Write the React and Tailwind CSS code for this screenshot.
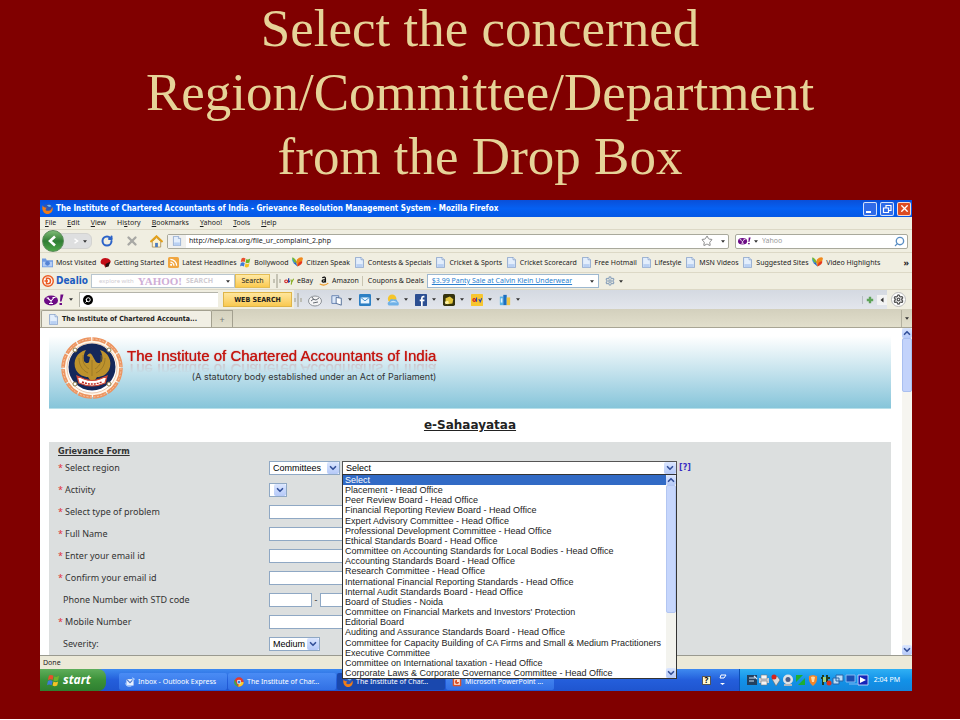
import React, { useState } from "react";
import { ChevronDown, ChevronUp, RotateCw, X, Star, Search, Settings } from "lucide-react";

const bookmarks = [
    { label: "Most Visited", icon: "folder" },
    { label: "Getting Started", icon: "red" },
    { label: "Latest Headlines", icon: "feed" },
    { label: "Bollywood", icon: "windows" },
    { label: "Citizen Speak", icon: "butterfly" },
    { label: "Contests & Specials", icon: "page" },
    { label: "Cricket & Sports", icon: "page" },
    { label: "Cricket Scorecard", icon: "page" },
    { label: "Free Hotmail", icon: "page" },
    { label: "Lifestyle", icon: "page" },
    { label: "MSN Videos", icon: "page" },
    { label: "Suggested Sites", icon: "page" },
    { label: "Video Highlights", icon: "butterfly" },
];

const menus = [
    ["", "F", "ile"],
    ["", "E", "dit"],
    ["", "V", "iew"],
    ["Hi", "s", "tory"],
    ["", "B", "ookmarks"],
    ["", "Y", "ahoo!"],
    ["", "T", "ools"],
    ["", "H", "elp"],
];

const committees = [
    "Select",
    "Placement - Head Office",
    "Peer Review Board - Head Office",
    "Financial Reporting Review Board - Head Office",
    "Expert Advisory Committee - Head Office",
    "Professional Development Committee - Head Office",
    "Ethical Standards Board - Head Office",
    "Committee on Accounting Standards for Local Bodies - Head Office",
    "Accounting Standards Board - Head Office",
    "Research Committee - Head Office",
    "International Financial Reporting Standards - Head Office",
    "Internal Audit Standards Board - Head Office",
    "Board of Studies - Noida",
    "Committee on Financial Markets and Investors' Protection",
    "Editorial Board",
    "Auditing and Assurance Standards Board - Head Office",
    "Committee for Capacity Building of CA Firms and Small & Medium Practitioners",
    "Executive Committee",
    "Committee on International taxation - Head Office",
    "Corporate Laws & Corporate Governance Committee - Head Office",
];

function Icon({ name, className = "size-[11px]" }) {
    const shapes = {
        page: (
            <>
                <path d="M2 .5h7l3 3v10H2z" fill="#e3eefc" stroke="#7f9cc8" />
                <path d="M9 .5v3h3" fill="#fff" stroke="#7f9cc8" />
                <path d="M3 9h8v4H3z" fill="#b9d0f2" />
            </>
        ),
        folder: (
            <>
                <path d="M0 2h5l1 2h8v9H0z" fill="#6f9ae0" />
                <path d="M1 6h12v6H1z" fill="#b4cdf5" />
                <circle cx="7" cy="8" r="3" fill="#5684d4" />
            </>
        ),
        red: (
            <>
                <path d="M1 5c1-5 9-5 12-1 2 4-2 6-5 6l-1 4-2-4C2 10 0 8 1 5z" fill="#c30d17" />
                <path d="M7 9l6-3-2 6-4 1z" fill="#27100f" />
            </>
        ),
        feed: (
            <>
                <rect width="14" height="14" rx="2" fill="#f0a640" />
                <circle cx="4" cy="10" r="1.4" fill="#fff" />
                <path d="M3 6.500a4.500 4.500 0 0 1 4.500 4.500M3 3a8 8 0 0 1 8 8" fill="none" stroke="#fff" strokeWidth="1.600" />
            </>
        ),
        windows: (
            <>
                <path d="M2 2q2-2 5 0L6 6.500q-2-1.500-5 0z" fill="#e8502c" />
                <path d="M8 2.500q2 1.500 5-.5l-1 5q-3 1.500-5 0z" fill="#6fb52b" />
                <path d="M1 7.500q2.500-1.500 5 0L5 12q-3-1.500-5 0z" fill="#3e7ad8" />
                <path d="M7 8q2.500 1.500 5 0l-1 4.500q-3 1.500-5 0z" fill="#f6c126" />
            </>
        ),
        butterfly: (
            <>
                <path d="M7 7L1 1Q-1 4 2 7z" fill="#2f9ede" />
                <path d="M7 8L4 3Q2 0 0 1l3 6z" fill="#7ab82e" />
                <path d="M7 12Q3 4 9 1q4-2 5 1-1 5-7 10z" fill="#f08a1c" />
                <path d="M7 12Q7 6 13 5q1 4-6 7z" fill="#e5371e" />
                <path d="M7 12L1 7h4z" fill="#2367c4" />
            </>
        ),
        firefox: (
            <>
                <circle cx="7" cy="7" r="6" fill="#2d55b5" />
                <path d="M1 3c-2 5 1 11 6 11s8-5 6-9c-1 4-3 5-6 5S4 8 6 6C3 6 1 5 1 3z" fill="#ef7d17" />
                <path d="M6 3q4-2 6 1l-3 1z" fill="#71b7ee" />
            </>
        ),
        chrome: (
            <>
                <circle cx="7" cy="7" r="6.500" fill="#e33b2e" />
                <path d="M1 4l5 9.500A6.500 6.500 0 0 1 1 4z" fill="#3ea94b" />
                <path d="M7 7h6.500A6.500 6.500 0 0 1 6 13.500z" fill="#f8cf2d" />
                <circle cx="7" cy="7" r="3" fill="#fff" />
                <circle cx="7" cy="7" r="2.200" fill="#3f7be0" />
            </>
        ),
        outlook: (
            <>
                <path d="M2 3h10v9H2z" fill="#e8f1ff" />
                <path d="M2 3l5 5 5-5" fill="none" stroke="#4d78c9" strokeWidth="1.500" />
                <path d="M1 8a5 5 0 0 0 8 4M10 1l3 2-3 2" fill="none" stroke="#a8ccff" strokeWidth="1.500" />
            </>
        ),
        powerpoint: (
            <>
                <rect x="1" y="1" width="12" height="12" rx="1" fill="#d9532c" />
                <rect x="3" y="3" width="8" height="8" fill="#fbe5da" />
                <path d="M7 4a3 3 0 1 0 3 3H7z" fill="#d9532c" />
            </>
        ),
        home: (
            <>
                <path d="M2.500 7v6h9V7L7 3z" fill="#fff3cf" stroke="#a08450" strokeWidth=".8" />
                <path d="M.5 7.500L7 1.300l6.500 6.200" fill="none" stroke="#e3a01a" strokeWidth="2" />
                <path d="M5.500 8.500h3V13h-3z" fill="#4c7bc0" />
            </>
        ),
        pages: (
            <>
                <path d="M1 2h8v9H1z" fill="#dbe7f8" stroke="#5a79ab" />
                <path d="M6 4l6 1v8l-6-2z" fill="#fff" stroke="#44618f" />
            </>
        ),
        mail: (
            <>
                <rect width="14" height="14" rx="1.500" fill="#2c7fc4" />
                <path d="M2 4h10v7H2z" fill="#e9f5ff" />
                <path d="M2 4l5 4 5-4" fill="none" stroke="#2c7fc4" />
            </>
        ),
        weather: (
            <>
                <circle cx="6" cy="5.500" r="5" fill="#f5c52c" />
                <path d="M2 13.500q-3-3 1-5 1-4 5-2 4-1 4 2 3 2 1 5z" fill="#6fb1e8" />
                <path d="M3 10q4-4 9 0-4-1-9 0z" fill="#cde7fb" />
            </>
        ),
        facebook: (
            <>
                <rect width="14" height="14" rx="1" fill="#2c4f92" />
                <path d="M11 3H9.500Q8 3 8 5v9M5.500 7.500H11" fill="none" stroke="#fff" strokeWidth="2" />
            </>
        ),
        cards: (
            <>
                <rect width="14" height="14" rx="2" fill="#34330f" />
                <path d="M3 5l5-2 4 3-1 5-6 1-2-3z" fill="#e2c63f" />
                <path d="M2 9l4-1 1 3-4 1z" fill="#fff3a6" />
            </>
        ),
        market: (
            <>
                <rect width="14" height="14" rx="1" fill="#f7c62f" />
                <circle cx="3.800" cy="7" r="1.600" fill="none" stroke="#d42222" strokeWidth="1.300" />
                <path d="M6.500 4v5M9 6l2 3M12.500 5l-2 5" fill="none" stroke="#2d49b0" strokeWidth="1.300" />
            </>
        ),
        ebay: (
            <>
                <circle cx="3" cy="7.500" r="2" fill="none" stroke="#d42222" strokeWidth="1.500" />
                <path d="M6.500 3v6.500M6.500 7.500h2" fill="none" stroke="#27409e" strokeWidth="1.800" />
                <path d="M9.500 5l1.500 3.500L13.500 4M11 8l-1 4" fill="none" stroke="#86ac20" strokeWidth="1.500" />
            </>
        ),
        amazon: (
            <>
                <path d="M4.500 2.500Q9 0 9 4v5M9 5Q4 5 4.500 7.500 6 10 9 7" fill="none" stroke="#111" strokeWidth="1.800" />
                <path d="M1 11q6 4 12-1" fill="none" stroke="#ee941c" strokeWidth="1.600" />
            </>
        ),
        books: (
            <>
                <path d="M1 3h4v10H1z" fill="#58b4e8" />
                <path d="M5 1h4v12H5z" fill="#1c6fc0" />
                <path d="M9 4h4v9H9z" fill="#f0c543" />
                <path d="M2 5h2v5H2z" fill="#e1f4ff" />
            </>
        ),
        camera: (
            <>
                <ellipse cx="7" cy="8" rx="6.500" ry="5" fill="#f4f4f4" stroke="#8e9399" />
                <path d="M3 8q2-3 5-1l3-2M5 10l5-1M4 4l2 3" fill="none" stroke="#666c74" />
            </>
        ),
    };
    return (
        <svg viewBox="0 0 14 14" className={"shrink-0 " + className} aria-hidden="true">
            {shapes[name]}
        </svg>
    );
}

function Caret() {
    return (
        <svg viewBox="0 0 6 4" className="w-1 h-[3px] shrink-0" aria-hidden="true">
            <path d="M0 0h6L3 4z" fill="#333" />
        </svg>
    );
}

function Handle() {
    return (
        <svg viewBox="0 0 8 14" className="w-2 h-[14px] shrink-0" aria-hidden="true">
            <path d="M4 0v14M1 5v4M7 5v4" stroke="#a9a797" strokeWidth="1.200" />
        </svg>
    );
}

function YahooMark({ className }) {
    return (
        <svg viewBox="0 0 40 24" className={"shrink-0 " + className} aria-hidden="true">
            <ellipse cx="14" cy="13" rx="14" ry="10" fill="#6c0a85" />
            <path d="M7 8l7 6 6-7M14 13v6M10 19h8M5 8h5M17 7h6" stroke="#fff" strokeWidth="2.200" fill="none" />
            <path d="M33 1h6l-4 14h-3zM31 18h5v4h-5z" fill="#6c0a85" />
        </svg>
    );
}

function Emblem() {
    return (
        <svg viewBox="0 0 64 64" className="size-16 shrink-0" role="img" aria-label="Institute emblem">
            <circle cx="32" cy="32" r="29" fill="#fff6ea" stroke="#ec9460" strokeWidth="3.500" strokeDasharray="14 1.200" />
            <circle cx="32" cy="32" r="29" fill="none" stroke="#fbd9c0" strokeWidth=".7" strokeDasharray="2 1.500" />
            <circle cx="32" cy="32" r="25" fill="#fff" stroke="#dba57c" strokeWidth=".6" />
            <circle cx="32" cy="31" r="23.500" fill="#14275a" />
            <path
                d="M32 19c-2-3-4-1-5 1l3 1-1 5c-1 2-4 1-5-1-1-4 0-8 2-11-9 2-14 11-10 20 3 5 8 7 12 7l2 3h5l2-3c5 0 9-2 12-7 4-9-1-18-9-20 2 3 3 7 2 11-1 2-4 3-6 1z"
                fill="#bd922c"
            />
            <path d="M19 22c0 7 3 12 9 15M45 22c0 7-3 12-9 15M23 19c-1 6 1 11 6 14M41 19c1 6-1 11-6 14M32 24v16" stroke="#8f7024" strokeWidth=".7" fill="none" />
            <path d="M17 40l7 3q8 3 16 0l7-3-2 7q-13 6-26 0z" fill="#fff" stroke="#d64b38" strokeWidth="1.200" />
            <path d="M22 46q10 4 20 0" stroke="#c02a1f" strokeWidth="1.500" strokeDasharray="2 1" fill="none" />
            <g fill="#fff" stroke="#8d7c48">
                <circle cx="15" cy="14" r="2" />
                <circle cx="49" cy="14" r="2" />
                <circle cx="15" cy="48" r="2" />
                <circle cx="49" cy="48" r="2" />
            </g>
        </svg>
    );
}

function ArrowBox({ up }) {
    const Arrow = up ? ChevronUp : ChevronDown;
    return (
        <span className="flex items-center justify-center rounded-xs bg-gradient-to-b from-[#dbe6fe] to-[#b5c9f8] text-[#33509a]">
            <Arrow className="size-[10px]" strokeWidth={4} />
        </span>
    );
}

function XpSelect({ id, label, className, value, onChange, options }) {
    return (
        <div className={"relative h-[14px] border bg-white " + className}>
            <select
                id={id}
                aria-label={label}
                value={value}
                onChange={onChange}
                className="block w-full h-full appearance-none bg-transparent pl-[3px] font-['Liberation_Sans',sans-serif] text-[9px] leading-[12px] text-black outline-none"
            >
                {options.map((o) => (
                    <option key={o}>{o}</option>
                ))}
            </select>
            <span className="absolute inset-y-0 right-0 grid w-3 pointer-events-none">
                <ArrowBox />
            </span>
        </div>
    );
}

function FormRow({ id, label, required, children }) {
    return (
        <div className="flex items-center h-[22px]">
            <label htmlFor={id} className="flex w-[211px] shrink-0 items-center">
                {required ? <span className="w-[7px] text-[#e0303a]">*</span> : <span className="w-[5px]" />}
                {label}
            </label>
            {children}
        </div>
    );
}

function TextBox({ id, label, className }) {
    return <input id={id} aria-label={label} type="text" className={"h-[14px] border border-[#8fa8c4] bg-white px-1 text-[9px] outline-none " + className} />;
}

function GrievanceForm() {
    const [region, setRegion] = useState("Committees");
    const [committee, setCommittee] = useState("Select");
    const [severity, setSeverity] = useState("Medium");

    return (
        <form className="bg-[#dcdfdf] pl-[9px] font-['Noto_Sans',sans-serif] text-[9px] leading-3 text-[#333]">
            <h3 className="pt-[3px] h-[15px] text-[9px] leading-3 font-bold underline font-['DejaVu_Sans_Condensed','DejaVu_Sans',sans-serif]">Grievance Form</h3>
            <FormRow id="region" label="Select region" required>
                <XpSelect
                    id="region"
                    className="w-[71px] border-[#8fa8c4]"
                    value={region}
                    onChange={(e) => setRegion(e.target.value)}
                    options={["Committees", "Regions", "Departments"]}
                />
                <div className="relative ml-[2px]">
                    <XpSelect
                        id="committee"
                        label="Committee"
                        className="w-[335px] border-[#555]"
                        value={committee}
                        onChange={(e) => setCommittee(e.target.value)}
                        options={committees}
                    />
                    {/* Open list of the committee drop-down */}
                    <div className="absolute left-0 top-full z-20 -mt-px flex h-[205px] w-full border border-[#333] bg-white">
                        <ul role="listbox" aria-label="Committee" className="flex min-w-0 flex-1 flex-col font-['Liberation_Sans',sans-serif] text-[9px] leading-[10px] text-[#222]">
                            {committees.map((c) => (
                                <li
                                    key={c}
                                    role="option"
                                    aria-selected={c === committee}
                                    onClick={() => setCommittee(c)}
                                    className={"flex-1 whitespace-nowrap pl-[2px] " + (c === committee ? "bg-[#316ac5] text-white" : "")}
                                >
                                    {c}
                                </li>
                            ))}
                        </ul>
                        <div className="flex w-[10px] flex-col bg-[#f3f3ee]">
                            <ArrowBox up />
                            <div className="h-[128px] rounded-xs border border-[#b3c6f2] bg-[#c6d6fc]" />
                            <div className="flex-1" />
                            <ArrowBox />
                        </div>
                    </div>
                </div>
                <a href="#help" className="ml-[2px] font-['DejaVu_Sans',sans-serif] text-[8px] font-bold text-[#3a2fc4]">[?]</a>
            </FormRow>
            <FormRow id="activity" label="Activity" required>
                <XpSelect id="activity" className="w-[18px] border-[#8fa8c4]" options={[""]} />
            </FormRow>
            <FormRow id="problem" label="Select type of problem" required>
                <TextBox id="problem" className="w-[150px]" />
            </FormRow>
            <FormRow id="name" label="Full Name" required>
                <TextBox id="name" className="w-[150px]" />
            </FormRow>
            <FormRow id="email" label="Enter your email id" required>
                <TextBox id="email" className="w-[150px]" />
            </FormRow>
            <FormRow id="confirm" label="Confirm your email id" required>
                <TextBox id="confirm" className="w-[150px]" />
            </FormRow>
            <FormRow id="phone" label="Phone Number with STD code">
                <TextBox id="phone" className="w-[43px]" />
                <span className="w-2 text-center">-</span>
                <TextBox id="phone-number" label="Phone number" className="w-[100px]" />
            </FormRow>
            <FormRow id="mobile" label="Mobile Number" required>
                <TextBox id="mobile" className="w-[150px]" />
            </FormRow>
            <FormRow id="severity" label="Severity:">
                <XpSelect
                    id="severity"
                    className="w-[51px] border-[#8fa8c4]"
                    value={severity}
                    onChange={(e) => setSeverity(e.target.value)}
                    options={["Medium", "High", "Low"]}
                />
            </FormRow>
        </form>
    );
}

function TitleBar() {
    return (
        <div className="flex h-[17px] items-center gap-[3px] bg-gradient-to-b from-[#0a4fd8] via-[#0560f2] to-[#0458e6] pl-[2px] pr-px text-white">
            <Icon name="firefox" />
            <span className="flex-1 whitespace-nowrap font-['DejaVu_Sans_Condensed','DejaVu_Sans',sans-serif] text-[8px] leading-3 font-bold">
                The Institute of Chartered Accountants of India - Grievance Resolution Management System - Mozilla Firefox
            </span>
            <button aria-label="Minimize" className="flex size-[14px] items-end rounded-xs border border-white/80 bg-[#2f6be8] p-[2px]">
                <span className="h-[2px] w-[5px] bg-white" />
            </button>
            <button aria-label="Restore" className="size-[14px] rounded-xs border border-white/80 bg-[#2f6be8]">
                <svg viewBox="0 0 12 12" className="size-3">
                    <path d="M5 5V2.500h5v5H8M2.500 5h5v4.500h-5z" fill="none" stroke="#fff" strokeWidth="1.200" />
                </svg>
            </button>
            <button aria-label="Close" className="flex size-[14px] items-center justify-center rounded-xs border border-white/80 bg-[#dc4c22]">
                <X className="size-[11px]" strokeWidth={3} />
            </button>
        </div>
    );
}

function NavBar() {
    return (
        <div className="flex h-[23px] items-center border-b border-[#dcd8c6] px-[2px] pr-1">
            <div className="flex w-[55px] items-center">
                <button aria-label="Back" className="z-10 flex size-[22px] shrink-0 items-center justify-center rounded-full border border-[#5c8c5c] bg-gradient-to-b from-[#7dbb74] via-[#2f7d34] to-[#4ea648]">
                    <svg viewBox="0 0 12 12" className="size-3">
                        <path d="M8 1.500L3 6l5 4.500" fill="none" stroke="#fff" strokeWidth="2.600" />
                    </svg>
                </button>
                <button aria-label="Forward" className="-ml-1 flex h-4 w-[32px] items-center justify-between rounded-r-md border border-[#d3d3d0] bg-[#dedfe0] pl-3 pr-1">
                    <svg viewBox="0 0 8 8" className="size-[6px]">
                        <path d="M2 1l4 3-4 3" fill="none" stroke="#fff" strokeWidth="2" />
                    </svg>
                    <Caret />
                </button>
            </div>
            <div className="flex w-[70px] items-center justify-between px-1">
                <button aria-label="Reload"><RotateCw className="size-3 text-[#2c63c8]" strokeWidth={4} /></button>
                <button aria-label="Stop"><X className="size-[14px] text-[#a8a8a4]" strokeWidth={4} /></button>
                <button aria-label="Home"><Icon name="home" className="size-[13px]" /></button>
            </div>
            <div className="flex h-[15px] flex-1 items-center rounded-xs border border-[#a9a99c] bg-white">
                <span className="flex h-full w-[18px] items-center justify-center bg-[#f0f0ee]"><Icon name="page" className="size-[10px]" /></span>
                <input aria-label="Address" defaultValue="http://help.icai.org/file_ur_complaint_2.php" className="min-w-0 flex-1 bg-transparent pl-[3px] outline-none" />
                <Star className="mr-2 size-3 text-[#888]" strokeWidth={2} />
                <span className="flex pr-[3px]"><Caret /></span>
            </div>
            <div className="ml-[6px] flex h-[15px] w-[173px] items-center gap-[3px] rounded-xs border border-[#a9a99c] bg-white pl-[2px] pr-[2px]">
                <YahooMark className="h-[8px] w-[13px]" />
                <Caret />
                <input aria-label="Search Yahoo" placeholder="Yahoo" className="min-w-0 flex-1 bg-transparent pl-px outline-none placeholder:text-[#999]" />
                <Search className="size-[11px] -scale-x-100 text-[#5b8fc4]" strokeWidth={3} />
            </div>
        </div>
    );
}

function BookmarkBar() {
    return (
        <div className="flex h-[20px] items-center border-b border-[#dcd8c6] pl-[2px] pr-[3px]">
            <div className="flex flex-1 items-center justify-between pr-[23px]">
                {bookmarks.map((b) => (
                    <a key={b.label} href="#bookmark" className="flex items-center gap-[3px] whitespace-nowrap">
                        <Icon name={b.icon} />
                        {b.label}
                    </a>
                ))}
            </div>
            <button aria-label="More bookmarks" className="font-bold text-[9px]">»</button>
        </div>
    );
}

function DealioBar() {
    return (
        <div className="flex h-[17px] items-center border-b border-[#dcd8c6] pl-[2px]">
            <div className="flex w-[49px] items-center gap-[2px]">
                <svg viewBox="0 0 24 24" className="size-3 shrink-0">
                    <circle cx="12" cy="12" r="10.500" fill="#fff" stroke="#ea5a21" strokeWidth="3" />
                    <path d="M9 6.500h3q5 0 5 5.500t-5 5.500H9zM5 12h7" fill="none" stroke="#ea5a21" strokeWidth="3" />
                </svg>
                <span className="font-['DejaVu_Sans_Condensed','DejaVu_Sans',sans-serif] text-[10px] font-bold text-[#1d5cc0]">Dealio</span>
            </div>
            <div className="flex h-[14px] w-[144px] items-center gap-1 border border-[#b9c6cf] bg-white pl-[7px] pr-1 text-[#d0ccd2]">
                <span className="text-[6px]">explore with</span>
                <span className="font-['Liberation_Serif',serif] text-[11px] font-bold text-[#cfaed6]">YAHOO!</span>
                <span className="flex-1 font-bold">SEARCH</span>
                <Caret />
            </div>
            <button className="h-[14px] w-[35px] border border-[#e3bd55] bg-gradient-to-b from-[#ffe9a4] to-[#fbca4c]">Search</button>
            <div className="flex items-center gap-[3px] pl-[3px]">
                <Handle />
                <Icon name="ebay" className="size-[10px]" />
                <a href="#ebay">eBay</a>
            </div>
            <div className="mx-[3px] flex items-center gap-[3px] border-r border-[#c9c5b2] pl-[3px] pr-[3px]">
                <Icon name="amazon" className="size-[10px]" />
                <a href="#amazon">Amazon</a>
            </div>
            <a href="#coupons" className="w-[61px] pl-[2px] whitespace-nowrap">Coupons &amp; Deals</a>
            <div className="flex h-[14px] w-[172px] items-center justify-between border border-[#9db8d0] bg-white px-1">
                <a href="#sale" className="whitespace-nowrap text-[#2a7fd0] underline">$3.99 Panty Sale at Calvin Klein Underwear</a>
                <Caret />
            </div>
            <div className="flex items-center gap-1 pl-[6px]">
                <Settings className="size-[10px] text-[#8fa5bd]" strokeWidth={3} />
                <Caret />
            </div>
        </div>
    );
}

function YahooBar() {
    const tools = ["pages", "mail", "weather", "facebook", "cards", "market", "books"];
    return (
        <div className="flex h-[19px] items-center pl-1 pr-[6px]">
            <div className="flex w-[35px] items-center gap-[5px]">
                <YahooMark className="h-[12px] w-[20px]" />
                <Caret />
            </div>
            <div className="flex h-[15px] w-[139px] items-center border-t border-l border-[#b4b4aa] bg-white pl-[3px]">
                <span className="flex size-[10px] shrink-0 items-center justify-center rounded-full bg-black">
                    <Search className="size-[6px] -scale-x-100 text-white" strokeWidth={4} />
                </span>
                <input aria-label="Yahoo web search" className="min-w-0 flex-1 bg-transparent px-1 outline-none" />
            </div>
            <button className="ml-[5px] h-[15px] w-[69px] whitespace-nowrap border border-[#dfb548] bg-gradient-to-b from-[#ffe69b] to-[#f9c94f] font-['DejaVu_Sans_Condensed','DejaVu_Sans',sans-serif] font-bold">
                WEB SEARCH
            </button>
            <div className="ml-[2px] flex h-full flex-1 items-center bg-gradient-to-b from-[#d4d9e1] to-[#e3e6ec]">
                <Handle />
                <Icon name="camera" className="mx-[6px] size-[14px]" />
                <div className="flex flex-1 items-center gap-[7px] pl-[3px]">
                    {tools.map((t) => (
                        <button key={t} aria-label={t} className="flex items-center gap-[5px]">
                            <Icon name={t} className="size-[12px]" />
                            <Caret />
                        </button>
                    ))}
                </div>
                <button aria-label="Add" className="border-l border-[#b8bcc4] px-[3px]">
                    <svg viewBox="0 0 10 10" className="size-2">
                        <path d="M5 1v8M1 5h8" stroke="#5ea358" strokeWidth="3" />
                    </svg>
                </button>
                <svg viewBox="0 0 10 10" className="size-[10px] bg-[#f3f3f3]" aria-hidden="true">
                    <path d="M6.500 2.500v5L3.500 5z" fill="#333" />
                </svg>
            </div>
            <button aria-label="Settings" className="ml-1 flex size-[15px] items-center justify-center rounded-full border border-[#bbb] bg-white">
                <Settings className="size-[11px] text-[#555]" strokeWidth={3} />
            </button>
        </div>
    );
}

function TabStrip() {
    return (
        <div className="flex h-[19px] items-end border-b border-[#a8a594] bg-gradient-to-b from-[#d3d0bd] to-[#e2dfcc] pl-px">
            <button className="flex h-[17px] w-[171px] items-center gap-[3px] whitespace-nowrap rounded-t-xs border border-b-0 border-[#a3a08f] bg-[#f1efe4] pl-[6px] font-['DejaVu_Sans_Condensed','DejaVu_Sans',sans-serif] font-bold">
                <Icon name="page" />
                The Institute of Chartered Accounta...
            </button>
            <button aria-label="New tab" className="h-[17px] w-[21px] border border-b-0 border-l-0 border-[#a3a08f] text-[9px] leading-[15px] text-[#777]">+</button>
            <span className="flex-1" />
            <button aria-label="List tabs" className="flex h-[17px] w-[11px] items-center justify-center border-l border-[#b3b09f]"><Caret /></button>
        </div>
    );
}

function PageContent() {
    return (
        <div className="flex bg-white">
            <main className="ml-[9px] mr-[11px] min-w-0 flex-1">
                <header className="flex h-[81px] items-center gap-[3px] border-b border-[#b8dfe9] bg-gradient-to-b from-white from-10% to-[#86c5da] pl-[11px]">
                    <Emblem />
                    <div className="whitespace-nowrap text-right font-['Liberation_Sans',sans-serif]">
                        <h1 className="text-[15px] leading-[18px] text-[#c4150f] [text-shadow:0_0_1px_#c4150f] [-webkit-box-reflect:below_-5px_linear-gradient(transparent_30%,rgba(0,0,0,0.25))]">
                            The Institute of Chartered Accountants of India
                        </h1>
                        <p className="pt-[5px] pb-[5px] font-['Inter','Liberation_Sans',sans-serif] text-[9px] leading-[14px] text-[#333]">(A statutory body established under an Act of Parliament)</p>
                    </div>
                </header>
                <h2 className="h-[33px] text-center font-['DejaVu_Sans',sans-serif] text-[12px] leading-[33px] font-bold text-[#222] underline">e-Sahaayataa</h2>
                <GrievanceForm />
            </main>
            <div className="flex w-[10px] flex-col bg-[#f6f5f0]">
                <ArrowBox up />
                <div className="h-[54px] rounded-xs border border-[#a9bff0] bg-[#c3d3fb]" />
                <div className="flex-1" />
                <ArrowBox />
            </div>
        </div>
    );
}

function TaskButton({ icon, label, active }) {
    return (
        <button
            className={
                "flex h-[17px] w-[108px] items-center gap-[3px] whitespace-nowrap rounded-xs pl-[6px] " +
                (active ? "bg-[#1a48ae]" : "bg-gradient-to-b from-[#4a8cf5] to-[#3270e4]")
            }
        >
            <Icon name={icon} className="size-[10px]" />
            {label}
        </button>
    );
}

function Tray() {
    return (
        <div className="flex h-full w-[173px] items-center justify-between border-l border-[#0b4fb5] bg-gradient-to-b from-[#2fb0f4] via-[#1292e8] to-[#1486dc] pl-[7px] pr-3">
            <svg viewBox="0 0 122 12" className="h-3 w-[122px]" aria-hidden="true">
                <path d="M0 1h10v10H0z" fill="#23405f" />
                <path d="M2 4h6M2 7h5M7 2l3 3" stroke="#cfe4f7" strokeWidth="1.200" />
                <path d="M12 4h10v5H12z" fill="#c9ccd3" />
                <path d="M14 1h6v4h-6zM14 7h6v4h-6z" fill="#f5f5f5" stroke="#777" strokeWidth=".6" />
                <path d="M25 5l5-3 3 4-4 6z" fill="#dcdcdc" stroke="#666" strokeWidth=".6" />
                <circle cx="27" cy="3" r="2.500" fill="#d4241d" />
                <circle cx="41" cy="5.500" r="5" fill="#dfe2e6" />
                <circle cx="41" cy="5.500" r="2.500" fill="#4c5d86" />
                <path d="M37 11h8" stroke="#b2b6bd" strokeWidth="2" />
                <path d="M49 1h7l-7 7zM58 4v7h-7z" fill="#1eae32" />
                <path d="M62 2l4-1 4 1q1 6-4 10-5-4-4-10z" fill="#f0852a" />
                <path d="M64 3q2-1 4 0l-1 5h-2z" fill="#ffd9a0" />
                <path d="M74 4h9M76 1v10M80 1v7" stroke="#203b20" strokeWidth="2" />
                <path d="M76 3h3v5h-3z" fill="#9ed07f" />
                <circle cx="82" cy="9" r="2.500" fill="#dd3322" />
                <path d="M89 1h7v6h-7zM86 4h6v6h-6z" fill="#b9dcf8" stroke="#2865a8" />
                <path d="M99 1h9v7h-9zM102 10h8" fill="#1a4fb4" stroke="#83b9f2" />
                <path d="M111 1h10v10h-10z" fill="#1425b8" stroke="#dce5ff" strokeWidth=".8" />
                <path d="M113 3l6 3-6 3z" fill="#fff" />
            </svg>
            <span className="whitespace-nowrap">2:04 PM</span>
        </div>
    );
}

function Taskbar() {
    return (
        <div className="flex h-[22px] items-center bg-gradient-to-b from-[#3f8af0] via-[#245edb] to-[#1f55cf] text-white">
            <button className="flex h-full w-[66px] items-center gap-[3px] rounded-r-lg bg-gradient-to-b from-[#5fae5b] via-[#3b9139] to-[#2f7f30] pl-[7px] font-['Open_Sans',sans-serif] text-[12px] font-bold italic">
                <Icon name="windows" className="size-[13px]" />
                start
            </button>
            <div className="flex h-full flex-1 items-end gap-px pl-[13px] pb-px">
                <TaskButton icon="outlook" label="Inbox - Outlook Express" />
                <TaskButton icon="chrome" label="The Institute of Char..." />
                <TaskButton icon="firefox" label="The Institute of Char..." active />
                <TaskButton icon="powerpoint" label="Microsoft PowerPoint ..." />
            </div>
            <div className="flex items-center gap-2 pr-3">
                <span className="flex size-[9px] items-center justify-center border border-[#555] bg-[#fff9cf] text-[8px] font-bold text-black">?</span>
                <svg viewBox="0 0 8 12" className="h-3 w-2" aria-hidden="true">
                    <path d="M2 1h5L5 4H1z" fill="none" stroke="#fff" />
                    <path d="M1 9h5l-2.500 2z" fill="#fff" />
                </svg>
            </div>
            <Tray />
        </div>
    );
}

export default function App() {
    return (
        <div className="min-h-screen bg-[#800000] pb-7">
            <h1 className="-mt-1 mb-3 text-center font-['Liberation_Serif',serif] text-[53px] leading-[64px] text-[#e6d398]">
                Select the concerned
                <br />
                Region/Committee/Department
                <br />
                from the Drop Box
            </h1>
            <div className="ml-10 mr-12 bg-[#f0eee1] font-['Noto_Sans',sans-serif] text-[7px] leading-[10px] text-[#1c1c1c]">
                <TitleBar />
                <nav className="flex h-[13px] items-center gap-[11px] border-b border-[#dcd8c6] pl-[5px]">
                    {menus.map(([before, key, after]) => (
                        <button key={before + key + after}>
                            {before}<u>{key}</u>{after}
                        </button>
                    ))}
                </nav>
                <NavBar />
                <BookmarkBar />
                <DealioBar />
                <YahooBar />
                <TabStrip />
                <PageContent />
                <div className="h-[14px] border-t border-[#9a9a90] bg-[#ece9d8] pl-[3px] leading-[13px]">Done</div>
                <Taskbar />
            </div>
        </div>
    );
}
